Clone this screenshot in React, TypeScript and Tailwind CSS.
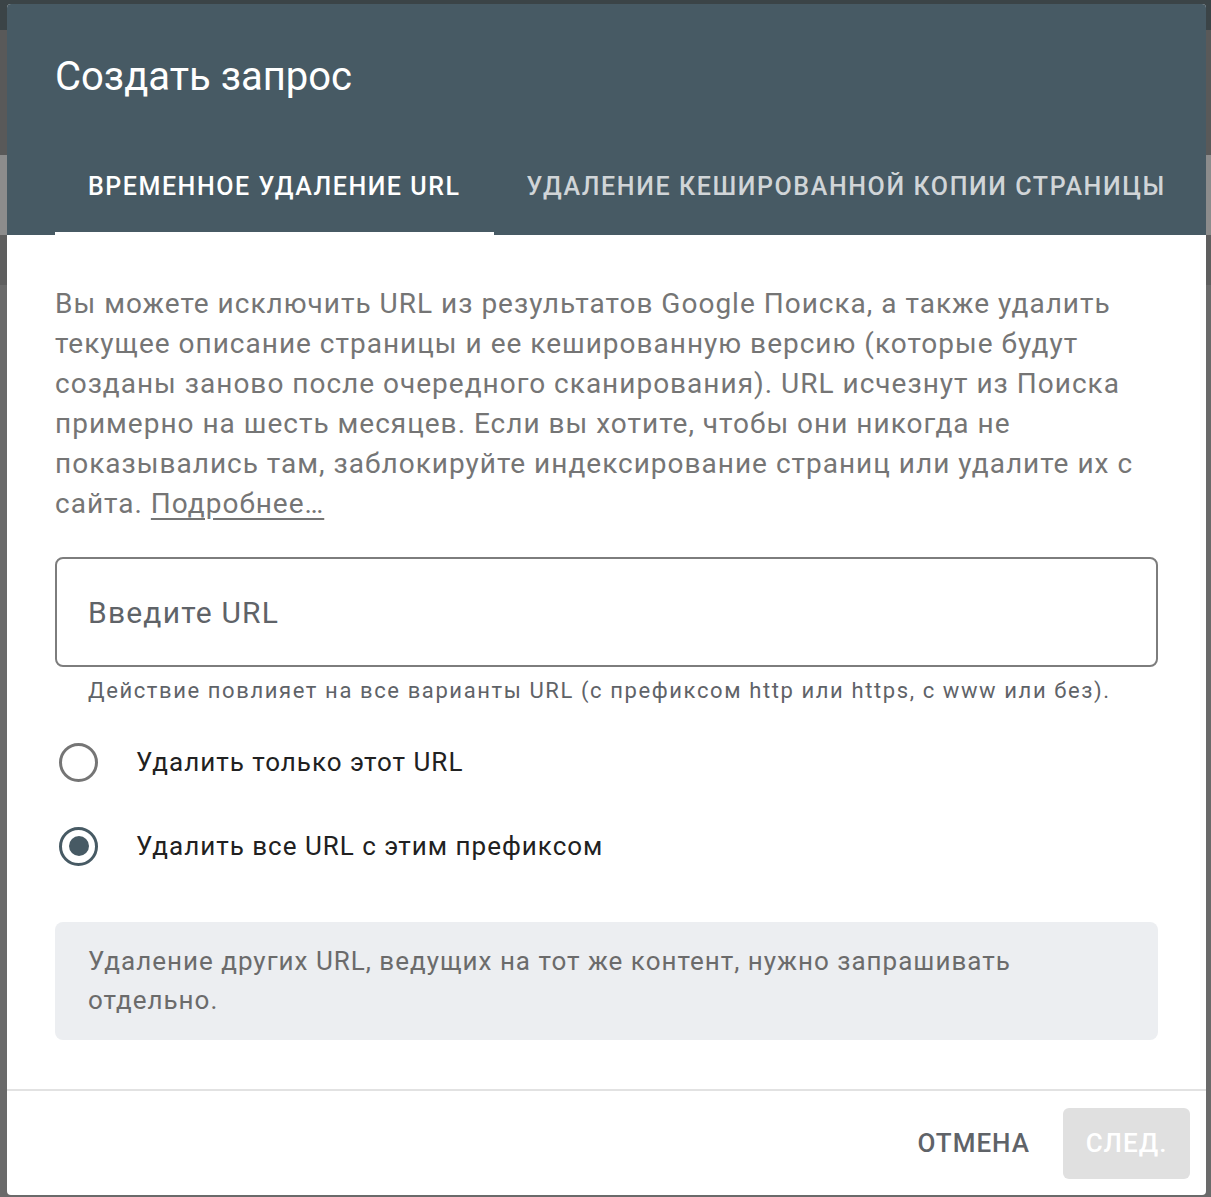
import React from "react";

export default function App() {
  return (
    <div
      className="relative h-[1197px] w-full overflow-hidden bg-[#5a5a5a]"
      style={{ fontFamily: "Roboto, 'Noto Sans', sans-serif" }}
    >
      {/* underlying page hints */}
      <div className="flex h-full w-full flex-col">
        <div className="h-[30px] bg-[#3b4447]" />
        <div className="h-[125px] bg-[#595959]" />
        <div className="h-[80px] bg-[#8c8c8c]" />
        <div className="h-[50px] bg-[#5e5e5e]" />
        <div className="flex-1 bg-[#6a6a6a]" />
      </div>
      <div className="absolute left-[7px] top-[4px] flex h-[1191px] w-[1199px] flex-col overflow-hidden rounded-[4px] bg-white">
        {/* header */}
        <div className="flex flex-col bg-[#475a64]">
          <div className="h-[135px] pl-[48px] pt-[51px] text-[40px] leading-[44px] text-white">
            Создать запрос
          </div>
          <div className="flex h-[96px] pl-[48px]">
            <div className="flex h-full items-center border-b-[3px] border-white px-[33px] pt-[3px] text-[25px] font-medium tracking-[1.55px] text-white">
              ВРЕМЕННОЕ УДАЛЕНИЕ URL
            </div>
            <div className="flex h-full items-center px-[33px] text-[25px] font-medium tracking-[1.6px] text-white/75">
              УДАЛЕНИЕ КЕШИРОВАННОЙ КОПИИ СТРАНИЦЫ
            </div>
          </div>
        </div>

        {/* body */}
        <div className="flex flex-col px-[48px] pb-[49px] pt-[49px]">
          <p className="whitespace-nowrap text-[28px] leading-[40px] tracking-[1px] text-[#757575]">
            Вы можете исключить URL из результатов Google Поиска, а также удалить
            <br />
            текущее описание страницы и ее кешированную версию (которые будут
            <br />
            созданы заново после очередного сканирования). URL исчезнут из Поиска
            <br />
            примерно на шесть месяцев. Если вы хотите, чтобы они никогда не
            <br />
            показывались там, заблокируйте индексирование страниц или удалите их с
            <br />
            сайта. <span className="underline underline-offset-[5px]">Подробнее…</span>
          </p>

          <div className="mt-[33px] flex h-[110px] items-center rounded-[8px] border-2 border-[#7d7d7d] px-[31px] text-[30px] tracking-[1.2px] text-[#5f6368]">
            Введите URL
          </div>
          <div className="mt-[10px] whitespace-nowrap px-[33px] text-[22px] leading-[28px] tracking-[1.6px] text-[#5f6368]">
            Действие повлияет на все варианты URL (с префиксом http или https, с www или без).
          </div>

          <div className="mt-[15px] flex flex-col">
            <div className="flex h-[84px] items-center">
              <div className="ml-[4px] h-[39px] w-[39px] rounded-full border-[3px] border-[#757575]" />
              <span className="ml-[38px] text-[26px] tracking-[1px] text-[#212121]">
                Удалить только этот URL
              </span>
            </div>
            <div className="flex h-[84px] items-center">
              <div className="ml-[4px] flex h-[39px] w-[39px] items-center justify-center rounded-full border-[3px] border-[#475a64]">
                <div className="h-[20px] w-[20px] rounded-full bg-[#475a64]" />
              </div>
              <span className="ml-[38px] text-[26px] tracking-[1px] text-[#212121]">
                Удалить все URL с этим префиксом
              </span>
            </div>
          </div>

          <div className="mt-[34px] whitespace-nowrap rounded-[8px] bg-[#eceef1] px-[33px] py-[20px] text-[26px] leading-[39px] tracking-[1px] text-[#6b6b6b]">
            Удаление других URL, ведущих на тот же контент, нужно запрашивать
            <br />
            отдельно.
          </div>
        </div>

        <div className="h-[2px] bg-[#e2e2e2]" />

        {/* footer */}
        <div className="flex flex-1 items-start justify-end gap-[17px] pr-[16px] pt-[17px]">
          <div className="flex h-[71px] items-center px-[16px] text-[26px] font-medium tracking-[1px] text-[#5f6368]">
            ОТМЕНА
          </div>
          <div className="flex h-[71px] w-[127px] items-center justify-center rounded-[6px] bg-[#e0e0e0] text-[26px] font-medium tracking-[1px] text-white">
            СЛЕД.
          </div>
        </div>
      </div>
    </div>
  );
}
